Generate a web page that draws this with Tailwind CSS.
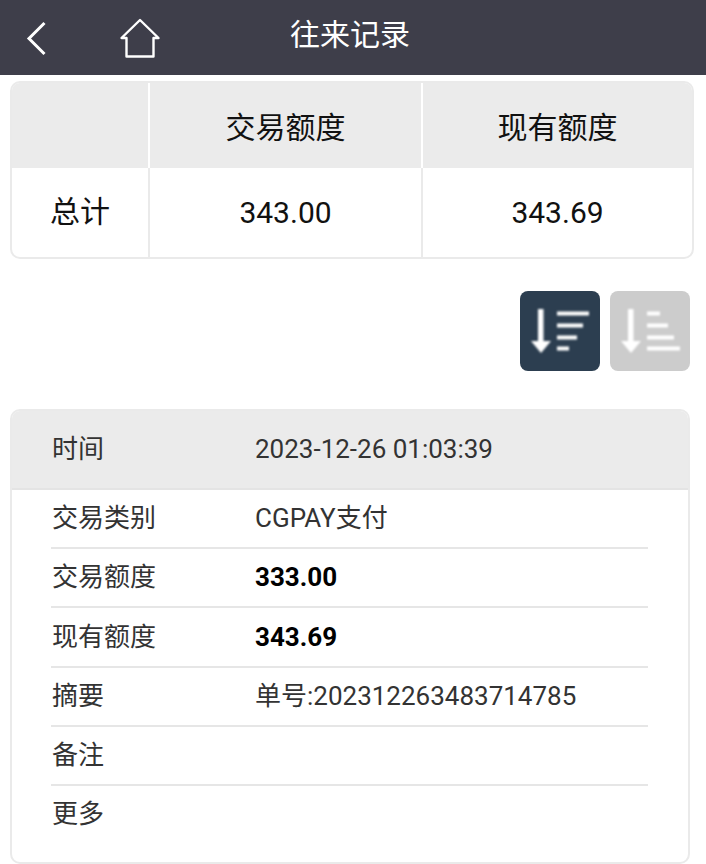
<!DOCTYPE html>
<html lang="zh"><head><meta charset="utf-8"><script src="https://cdn.jsdelivr.net/npm/@tailwindcss/browser@4"></script></head>
<body class="bg-white font-['Roboto','Noto_Sans_CJK_SC',sans-serif] text-[#111]">
<div class="w-[706px] h-[864px] overflow-hidden">
  <header class="relative h-[75px] bg-[#3e3e4a] flex items-center justify-center pr-[6px] pb-[6px]">
    <svg class="absolute left-[24px] top-[20px]" width="26" height="36" viewBox="0 0 26 36" fill="none" stroke="white" stroke-width="3"><path d="M20.5 3 L5 18.5 L20.5 34"/></svg>
    <svg class="absolute left-[118px] top-[17px]" width="44" height="42" viewBox="0 0 44 42" fill="none" stroke="white" stroke-width="2.4"><path d="M22 3 L3.5 21 L8.5 21 L8.5 39.5 L35.5 39.5 L35.5 21 L40.5 21 Z" stroke-linejoin="round"/></svg>
    <span class="text-white text-[30px] leading-none">往来记录</span>
  </header>
  <section class="mx-[10px] mt-[6px] w-[684px] h-[178px] border-2 border-[#eaeaea] rounded-[10px] overflow-hidden grid grid-cols-[136px_2px_271px_2px_1fr] grid-rows-[85px_1fr] text-[30px] text-center">
    <div class="bg-[#ebebeb]"></div><div class="bg-white"></div>
    <div class="bg-[#ebebeb] flex items-center justify-center pt-[4px]">交易额度</div><div class="bg-white"></div>
    <div class="bg-[#ebebeb] flex items-center justify-center pt-[4px]">现有额度</div>
    <div class="flex items-center justify-center pb-[2px]">总计</div><div class="bg-[#eaeaea]"></div>
    <div class="flex items-center justify-center">343.00</div><div class="bg-[#eaeaea]"></div>
    <div class="flex items-center justify-center">343.69</div>
  </section>
  <div class="flex justify-end gap-[10px] pr-[16px] mt-[32px]">
    <button class="w-[80px] h-[80px] rounded-[8px] bg-[#2c3e50] flex items-center justify-center overflow-hidden">
      <svg class="blur-[1px]" width="80" height="80" viewBox="0 0 80 80" fill="white"><rect x="18" y="18" width="5.5" height="34"/><path d="M11 50 H31 L21 62 Z"/><rect x="37" y="20.5" width="32" height="4"/><rect x="37" y="32.5" width="26" height="4"/><rect x="37" y="44.5" width="20" height="4"/><rect x="37" y="55.5" width="12" height="4"/></svg>
    </button>
    <button class="w-[80px] h-[80px] rounded-[8px] bg-[#cccccc] flex items-center justify-center overflow-hidden">
      <svg class="blur-[1px]" width="80" height="80" viewBox="0 0 80 80" fill="white"><rect x="18" y="18" width="5.5" height="34"/><path d="M11 50 H31 L21 62 Z"/><rect x="37" y="20.5" width="13" height="4"/><rect x="37" y="32.5" width="21" height="4"/><rect x="37" y="44.5" width="27" height="4"/><rect x="37" y="55.5" width="33" height="4"/></svg>
    </button>
  </div>
  <section class="mx-[10px] mt-[38px] w-[680px] h-[455px] border-2 border-[#eaeaea] rounded-[10px] overflow-hidden text-[26px] text-[#333]">
    <div class="h-[79px] bg-[#ebebeb] border-b-2 border-[#e4e4e4] flex items-center pl-[40px]"><span class="w-[203px]">时间</span><span>2023-12-26 01:03:39</span></div>
    <div class="mx-[39px] mr-[40px]">
      <div class="h-[59px] border-b-2 border-[#e6e6e6] flex items-center pl-[1px]"><span class="w-[203px]">交易类别</span><span>CGPAY支付</span></div>
      <div class="h-[59px] border-b-2 border-[#e6e6e6] flex items-center pl-[1px]"><span class="w-[203px]">交易额度</span><b class="text-black">333.00</b></div>
      <div class="h-[60px] border-b-2 border-[#e6e6e6] flex items-center pl-[1px]"><span class="w-[203px]">现有额度</span><b class="text-black">343.69</b></div>
      <div class="h-[59px] border-b-2 border-[#e6e6e6] flex items-center pl-[1px]"><span class="w-[203px]">摘要</span><span>单号:202312263483714785</span></div>
      <div class="h-[59px] border-b-2 border-[#e6e6e6] flex items-center pl-[1px]"><span class="w-[203px]">备注</span></div>
      <div class="h-[56px] flex items-center pl-[1px]"><span class="w-[203px]">更多</span></div>
    </div>
  </section>
</div>
</body></html>
